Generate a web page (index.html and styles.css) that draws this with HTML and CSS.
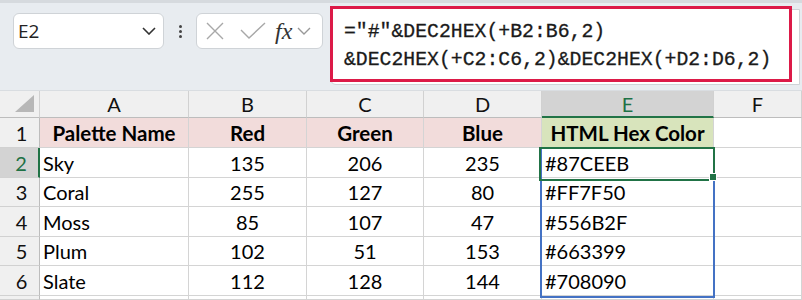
FILE: index.html
```html
<!DOCTYPE html>
<html>
<head>
<meta charset="utf-8">
<link rel="stylesheet" href="styles.css">
</head>
<body>
<div class="toolbar">
  <div class="namebox">
    <span class="nb-text">E2</span>
    <svg class="chev" width="14" height="8" viewBox="0 0 14 8"><path d="M1 1 L7 7 L13 1" fill="none" stroke="#333" stroke-width="1.6"/></svg>
  </div>
  <div class="dots"><span></span><span></span><span></span></div>
  <div class="fnbox">
    <svg width="20" height="20" viewBox="0 0 20 20"><path d="M2 2 L18 18 M18 2 L2 18" stroke="#a8a8a8" stroke-width="1.4" fill="none"/></svg>
    <svg width="26" height="20" viewBox="0 0 26 20"><path d="M1 9 L9 17 L25 2" stroke="#a8a8a8" stroke-width="1.4" fill="none"/></svg>
    <span class="fx">fx</span>
    <svg width="14" height="8" viewBox="0 0 14 8"><path d="M1 1 L7 7 L13 1" fill="none" stroke="#999" stroke-width="1.4"/></svg>
  </div>
  <div class="formula-wrap">
    <div class="formula">="#"&amp;DEC2HEX(+B2:B6,2)<br>&amp;DEC2HEX(+C2:C6,2)&amp;DEC2HEX(+D2:D6,2)</div>
  </div>
</div>
<div class="sheet">
  <div class="ch corner"><svg width="20" height="18" viewBox="0 0 20 18"><path d="M19 0 L19 17 L0 17 Z" fill="#b7b7b7"/></svg></div>
  <div class="ch">A</div>
  <div class="ch">B</div>
  <div class="ch">C</div>
  <div class="ch">D</div>
  <div class="ch ch-sel">E</div>
  <div class="ch">F</div>

  <div class="rh">1</div>
  <div class="c hdr pink">Palette Name</div>
  <div class="c hdr pink">Red</div>
  <div class="c hdr pink">Green</div>
  <div class="c hdr pink">Blue</div>
  <div class="c hdr green">HTML Hex Color</div>
  <div class="c"></div>

  <div class="rh rh-sel">2</div>
  <div class="c l">Sky</div>
  <div class="c n">135</div>
  <div class="c n">206</div>
  <div class="c n">235</div>
  <div class="c l">#87CEEB</div>
  <div class="c"></div>

  <div class="rh">3</div>
  <div class="c l">Coral</div>
  <div class="c n">255</div>
  <div class="c n">127</div>
  <div class="c n">80</div>
  <div class="c l">#FF7F50</div>
  <div class="c"></div>

  <div class="rh">4</div>
  <div class="c l">Moss</div>
  <div class="c n">85</div>
  <div class="c n">107</div>
  <div class="c n">47</div>
  <div class="c l">#556B2F</div>
  <div class="c"></div>

  <div class="rh">5</div>
  <div class="c l">Plum</div>
  <div class="c n">102</div>
  <div class="c n">51</div>
  <div class="c n">153</div>
  <div class="c l">#663399</div>
  <div class="c"></div>

  <div class="rh">6</div>
  <div class="c l">Slate</div>
  <div class="c n">112</div>
  <div class="c n">128</div>
  <div class="c n">144</div>
  <div class="c l">#708090</div>
  <div class="c"></div>

  <div class="rh"></div>
  <div class="c"></div>
  <div class="c"></div>
  <div class="c"></div>
  <div class="c"></div>
  <div class="c"></div>
  <div class="c"></div>

  <div class="range"></div>
  <div class="active"></div>
  <div class="handle"></div>
</div>
</body>
</html>
```

FILE: styles.css
```css
* { box-sizing: border-box; }
html, body { margin: 0; padding: 0; }
body {
  width: 802px;
  height: 300px;
  overflow: hidden;
  background: #ffffff;
  font-family: "Lato", "Open Sans", sans-serif;
  color: #000;
}
.toolbar {
  height: 91px;
  background: #e8ecf0;
  border-top: 3px solid #d6dade;
  border-bottom: 1px solid #d9dde1;
  display: flex;
  align-items: flex-start;
  position: relative;
}
.namebox {
  margin-left: 13px;
  margin-top: 10px;
  width: 151px;
  height: 36px;
  background: #fff;
  border: 1px solid #cfd3d7;
  border-radius: 6px;
  display: flex;
  align-items: center;
  justify-content: space-between;
  padding: 0 7px 0 4px;
}
.nb-text {
  font-family: "Open Sans", "Noto Sans", sans-serif;
  font-size: 19px;
  color: #222;
}
.dots {
  width: 32px;
  margin-top: 22px;
  display: flex;
  flex-direction: column;
  align-items: center;
  gap: 2px;
}
.dots span {
  width: 3px;
  height: 3px;
  background: #444;
  border-radius: 50%;
}
.fnbox {
  margin-top: 10px;
  width: 127px;
  height: 36px;
  background: #fff;
  border: 1px solid #cfd3d7;
  border-radius: 6px;
  display: flex;
  align-items: center;
  padding: 0 4px 0 8px;
  gap: 11px;
}
.fnbox svg:nth-child(2) { margin-left: 4px; }
.fx {
  font-family: "Liberation Serif", "DejaVu Serif", serif;
  font-style: italic;
  font-size: 24px;
  color: #333;
  letter-spacing: 0px;
  margin-left: -2px;
  margin-right: -6px;
}
.formula-wrap {
  margin-left: 7px;
  margin-top: 6px;
  width: 470px;
  height: 76px;
  background: #fff;
  border: 1px solid #cfd3d7;
  border-radius: 6px 0 0 6px;
  position: relative;
}
.formula {
  position: absolute;
  left: -1px;
  top: -4px;
  width: 462px;
  height: 76px;
  border: 3px solid #dc1a48;
  background: #fff;
  font-family: "Liberation Mono", "DejaVu Sans Mono", monospace;
  font-size: 19.8px;
  line-height: 28px;
  color: #1a1a1a;
  padding: 9px 0 0 11px;
  white-space: nowrap;
  -webkit-text-stroke: 0.3px #1a1a1a;
}
.sheet {
  display: grid;
  grid-template-columns: 40px 149px 118px 117px 118px 172px 88px;
  grid-template-rows: 27px 30px 30px 29px 30px 29px 30px 4px;
  position: relative;
  font-size: 20px;
}
.ch {
  background: #f0f0f0;
  border-right: 1px solid #d1d1d1;
  border-bottom: 1px solid #bdbdbd;
  display: flex;
  align-items: center;
  justify-content: center;
  font-size: 20px;
  color: #111;
}
.corner { justify-content: flex-end; align-items: flex-end; padding: 0 4px 4px 0; }
.ch-sel {
  background: #d3d3d3;
  color: #1e7145;
  border-bottom: 2px solid #217346;
}
.rh {
  background: #f0f0f0;
  border-right: 1px solid #bdbdbd;
  border-bottom: 1px solid #d1d1d1;
  display: flex;
  align-items: center;
  justify-content: center;
  padding-left: 4px;
  color: #111;
}
.rh-sel {
  background: #d3d3d3;
  color: #1e7145;
  border-right: 2px solid #217346;
}
.c {
  border-right: 1px solid #d4d4d4;
  border-bottom: 1px solid #d4d4d4;
  display: flex;
  align-items: center;
  white-space: nowrap;
}
.c.l { padding-left: 3px; }
.c.n { justify-content: center; }
.hdr { font-weight: bold; justify-content: center; font-size: 20.5px; }
.pink { background: #f2dcdb; }
.green { background: #d8e4bc; }
.range {
  position: absolute;
  left: 540px;
  top: 56px;
  width: 175px;
  height: 151px;
  border: 2px solid #4472c4;
}
.active {
  position: absolute;
  left: 539px;
  top: 56px;
  width: 176px;
  height: 34px;
  border: 2px solid #217346;
}
.handle {
  position: absolute;
  left: 709px;
  top: 82px;
  width: 8px;
  height: 8px;
  background: #217346;
  border: 1px solid #fff;
}
```
